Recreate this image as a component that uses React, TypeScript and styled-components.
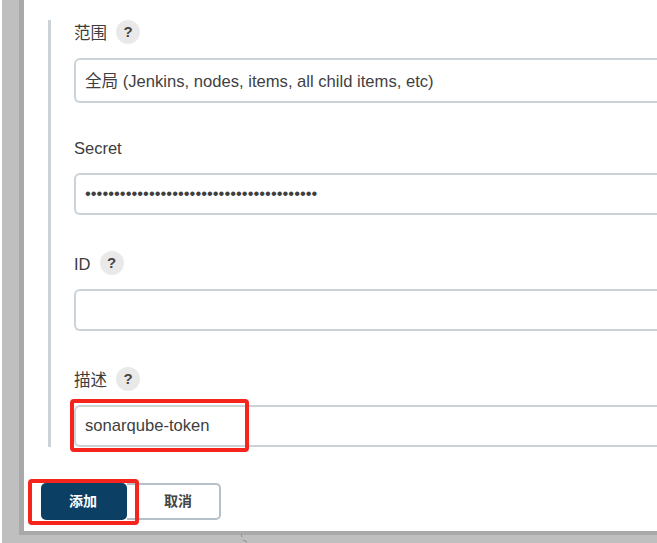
import styled, { createGlobalStyle } from 'styled-components'

const GlobalStyle = createGlobalStyle`
  html, body {
    margin: 0;
    padding: 0;
    background: #fff;
    overflow: hidden;
  }
  * {
    box-sizing: border-box;
  }
`

const Page = styled.div`
  width: 657px;
  height: 543px;
  overflow: hidden;
  margin-left: 2px;
  padding: 0 0 8px 17px;
  background: #bfbfbf;
  position: relative;
  font-family: 'Liberation Sans', 'Noto Sans CJK SC', sans-serif;
  color: #333;
`

const Dialog = styled.div`
  height: 100%;
  width: 660px;
  background: #fff;
  border-left: 5px solid #a9a9a9;
  border-bottom: 4px solid #a9a9a9;
  padding: 20px 0 0 24px;
`

const Fields = styled.div`
  height: 427px;
  border-left: 3px solid #cbd3d9;
  padding-left: 23px;
  width: 640px;
`

const Field = styled.div<{ $gap: number }>`
  margin-bottom: ${(p) => p.$gap}px;
`

const LabelRow = styled.div`
  display: flex;
  align-items: center;
  gap: 9px;
  height: 24px;
  margin-bottom: 14px;
  font-size: 16.5px;
  line-height: 24px;
  color: #3c3c3c;
`

const LabelText = styled.span`
  padding-top: 1px;
`

const Help = styled.span`
  display: flex;
  align-items: center;
  justify-content: center;
  width: 24px;
  height: 24px;
  border-radius: 50%;
  background: #e9e9e9;
  font-size: 15px;
  font-weight: 700;
  color: #444;
`

const InputBox = styled.div<{ $height: number }>`
  position: relative;
  display: flex;
  align-items: center;
  width: 640px;
  height: ${(p) => p.$height}px;
  padding: 0 0 1px 9px;
  border: 2px solid #cbd3d9;
  border-right: none;
  border-radius: 6px 0 0 6px;
  background: #fff;
  font-size: 16.6px;
  color: #3f3f3f;
`

const Actions = styled.div`
  display: flex;
  margin-top: 36px;
  margin-left: -7px;
`

const PrimaryButton = styled.button`
  position: relative;
  width: 86px;
  height: 37px;
  border: none;
  border-radius: 5px;
  background: #0b3f63;
  color: #fff;
  font: 700 14px 'Liberation Sans', 'Noto Sans CJK SC', sans-serif;
  padding: 0 2px 3px 0;
`

const SecondaryButton = styled.button`
  width: 94px;
  height: 37px;
  border: 2px solid #b6c0c8;
  border-left: none;
  border-radius: 0 5px 5px 0;
  background: #fff;
  color: #444;
  font: 700 14px 'Liberation Sans', 'Noto Sans CJK SC', sans-serif;
  padding: 0 0 3px 10px;
`

const Highlight = styled.span<{ $top: number; $left: number; $w: number; $h: number }>`
  position: absolute;
  top: ${(p) => p.$top}px;
  left: ${(p) => p.$left}px;
  width: ${(p) => p.$w}px;
  height: ${(p) => p.$h}px;
  border: 4px solid #f5241c;
  border-radius: 4px;
  pointer-events: none;
`

const Speck = styled.svg`
  position: absolute;
  left: 238px;
  top: 533px;
`

export default function App() {
  return (
    <>
      <GlobalStyle />
      <Page>
        <Dialog>
          <Fields>
            <Field $gap={32}>
              <LabelRow>
                <LabelText>范围</LabelText>
                <Help>?</Help>
              </LabelRow>
              <InputBox $height={45}>全局 (Jenkins, nodes, items, all child items, etc)</InputBox>
            </Field>
            <Field $gap={36}>
              <LabelRow>
                <LabelText>Secret</LabelText>
              </LabelRow>
              <InputBox $height={42}>{'•'.repeat(40)}</InputBox>
            </Field>
            <Field $gap={36}>
              <LabelRow>
                <LabelText>ID</LabelText>
                <Help>?</Help>
              </LabelRow>
              <InputBox $height={42} />
            </Field>
            <Field $gap={0}>
              <LabelRow>
                <LabelText>描述</LabelText>
                <Help>?</Help>
              </LabelRow>
              <InputBox $height={42}>
                sonarqube-token
                <Highlight $top={-8} $left={-6} $w={179} $h={53} />
              </InputBox>
            </Field>
          </Fields>
          <Actions>
            <PrimaryButton>
              添加
              <Highlight $top={-4} $left={-13} $w={111} $h={46} />
            </PrimaryButton>
            <SecondaryButton>取消</SecondaryButton>
          </Actions>
        </Dialog>
        <Speck width="10" height="10" viewBox="0 0 10 10">
          <path d="M1 1 L2 4 M3 7 L7 9" stroke="#8f8f8f" strokeWidth="1" fill="none" />
        </Speck>
      </Page>
    </>
  )
}
